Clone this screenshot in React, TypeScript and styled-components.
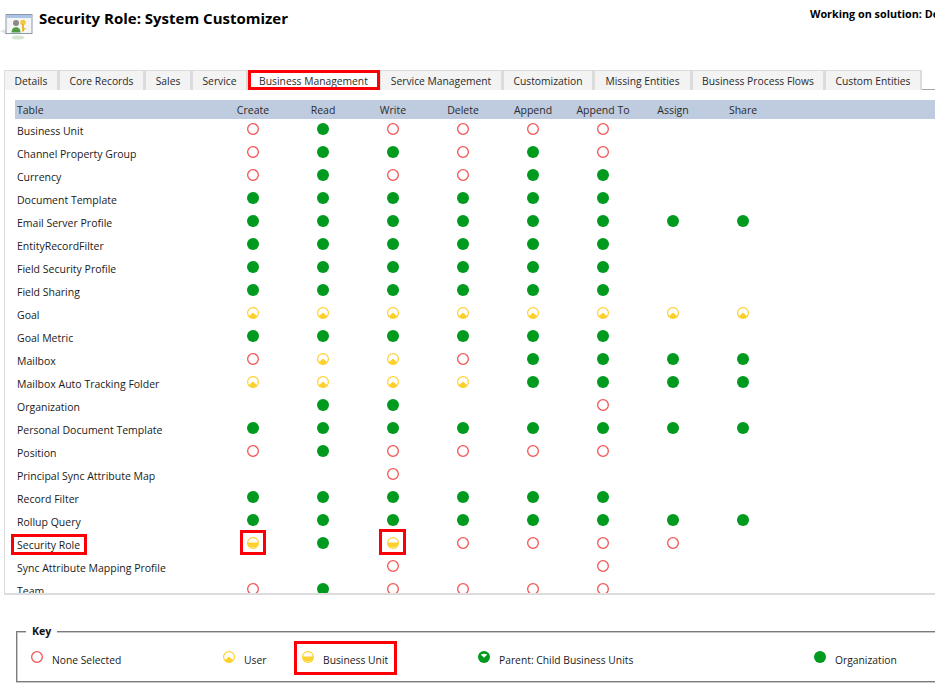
import styled, { createGlobalStyle } from "styled-components";

const GlobalStyle = createGlobalStyle`
  html, body {
    margin: 0;
    padding: 0;
    width: 935px;
    height: 687px;
    overflow: hidden;
    background: #fff;
  }
`;

const FONT = `"Open Sans", "Noto Sans", "Liberation Sans", sans-serif`;

const Page = styled.div`
  width: 935px;
  height: 687px;
  overflow: hidden;
  font-family: ${FONT};
  font-size: 10.5px;
  color: #1a1a1a;
`;

const Header = styled.header`
  display: flex;
  height: 70px;
  white-space: nowrap;
`;

const TitleIcon = styled.svg`
  width: 35px;
  height: 32px;
  margin-top: 10px;
  flex-shrink: 0;
`;

const Title = styled.h1`
  width: 771px;
  flex-shrink: 0;
  margin: 8px 0 0 4px;
  font-family: ${FONT};
  font-size: 15px;
  line-height: 20px;
  font-weight: 700;
  color: #000;
`;

const Solution = styled.div`
  flex-shrink: 0;
  margin-top: 6px;
  font-size: 10.8px;
  line-height: 16px;
  font-weight: 700;
  color: #000;
`;

const TabStrip = styled.nav`
  display: flex;
  height: 20px;
  padding-left: 4px;
`;

const Tab = styled.div<{ $w: number; $active?: boolean }>`
  position: relative;
  box-sizing: border-box;
  width: ${({ $w }) => $w}px;
  flex-shrink: 0;
  display: flex;
  align-items: center;
  justify-content: center;
  white-space: nowrap;
  font-size: 10.3px;
  background: ${({ $active }) => ($active ? "#fff" : "#f3f3f3")};
  border: 1px solid #dcdcdc;
  border-bottom: none;
  border-right-width: 2px;
  color: #2a2a2a;
`;

const TabLine = styled.div`
  flex: 1;
  border-bottom: 1px solid #a6a6a6;
`;

const Panel = styled.section`
  box-sizing: border-box;
  height: 505px;
  margin-left: 4px;
  padding: 10px 0 0 10px;
  overflow: hidden;
  border-left: 1px solid #dcdcdc;
  border-bottom: 2px solid #dcdcdc;
`;

const HeadRow = styled.div`
  display: flex;
  align-items: center;
  height: 19px;
  background: #bfcbdf;
  color: #2b2b2b;
`;

const Row = styled.div`
  display: flex;
  align-items: center;
  height: 23px;
`;

const NameCell = styled.div`
  position: relative;
  box-sizing: border-box;
  width: 203px;
  flex-shrink: 0;
  padding: 1px 0 0 2px;
  white-space: nowrap;
`;

const Cell = styled.div`
  position: relative;
  width: 70px;
  flex-shrink: 0;
  display: flex;
  align-items: center;
  justify-content: center;
  white-space: nowrap;
`;

const IconCell = styled(Cell)`
  height: 12px;
  margin-top: -3px;
`;

// red annotation frame drawn over a cell, offsets from the cell box
const Mark = styled.span<{ $t: number; $r: number; $b: number; $l: number }>`
  position: absolute;
  top: ${({ $t }) => $t}px;
  right: ${({ $r }) => $r}px;
  bottom: ${({ $b }) => $b}px;
  left: ${({ $l }) => $l}px;
  border: 3px solid #fb0007;
  pointer-events: none;
`;

const Key = styled.fieldset`
  box-sizing: border-box;
  width: 1000px;
  height: 58px;
  margin: 29px 0 0 16px;
  padding: 0 0 0 14px;
  border: 1px solid #7b7b7b;
  box-shadow: 0 1px 0 #c8c8c8, inset 0 1px 0 #c8c8c8, inset 1px 0 0 #c8c8c8;
`;

const Legend = styled.legend`
  margin-left: -5px;
  padding: 0 6px;
  background: #fff;
  font-weight: 700;
  font-size: 10.6px;
  line-height: 14px;
  color: #111;
`;

const KeyRow = styled.div`
  display: flex;
  align-items: center;
  height: 31px;
  margin-top: 5px;
`;

const KeyItem = styled.div<{ $w: number }>`
  position: relative;
  width: ${({ $w }) => $w}px;
  flex-shrink: 0;
  display: flex;
  align-items: center;
  gap: 9px;
  white-space: nowrap;
`;

const KeyIcon = styled.span`
  display: flex;
  margin-top: -3px;
`;

const KeyLabel = styled.span`
  padding-top: 2px;
  font-size: 10.3px;
`;

type Level = "N" | "U" | "B" | "P" | "O" | "";

const RED = "#f25555";
const YELLOW = "#fdd12d";
const GREEN = "#009a1f";

function Depth({ level }: { level: Level }) {
  if (!level) return null;
  return (
    <svg width="12" height="12" viewBox="0.5 0.5 12 12">
      {level === "N" && <circle cx="6.5" cy="6.5" r="5.35" fill="#fff" stroke={RED} strokeWidth="1.3" />}
      {level === "U" && (
        <>
          <circle cx="6.5" cy="6.5" r="5.4" fill="#fff" stroke={YELLOW} strokeWidth="1.2" />
          <path d="M2 10 L6.5 6 L11 10 A6 6 0 0 1 2 10 Z" fill={YELLOW} />
        </>
      )}
      {level === "B" && (
        <>
          <circle cx="6.5" cy="6.5" r="5.4" fill="#fff" stroke={YELLOW} strokeWidth="1.2" />
          <path d="M0.6 6 H12.4 A6 6 0 0 1 0.6 6 Z" fill={YELLOW} />
        </>
      )}
      {level === "P" && (
        <>
          <circle cx="6.5" cy="6.5" r="6" fill={GREEN} />
          <path d="M3.2 4 Q6.5 2.6 9.8 4 L6.5 7.2 Z" fill="#fff" />
        </>
      )}
      {level === "O" && <circle cx="6.5" cy="6.5" r="6" fill={GREEN} />}
    </svg>
  );
}

const TABS = [
  { label: "Details", w: 55 },
  { label: "Core Records", w: 86 },
  { label: "Sales", w: 47 },
  { label: "Service", w: 56 },
  { label: "Business Management", w: 132, active: true },
  { label: "Service Management", w: 123 },
  { label: "Customization", w: 91 },
  { label: "Missing Entities", w: 98 },
  { label: "Business Process Flows", w: 133 },
  { label: "Custom Entities", w: 97 },
];

const COLUMNS = ["Create", "Read", "Write", "Delete", "Append", "Append To", "Assign", "Share"];

const ROWS: { name: string; levels: Level[] }[] = [
  { name: "Business Unit", levels: ["N", "O", "N", "N", "N", "N"] },
  { name: "Channel Property Group", levels: ["N", "O", "O", "N", "O", "N"] },
  { name: "Currency", levels: ["N", "O", "N", "N", "O", "O"] },
  { name: "Document Template", levels: ["O", "O", "O", "O", "O", "O"] },
  { name: "Email Server Profile", levels: ["O", "O", "O", "O", "O", "O", "O", "O"] },
  { name: "EntityRecordFilter", levels: ["O", "O", "O", "O", "O", "O"] },
  { name: "Field Security Profile", levels: ["O", "O", "O", "O", "O", "O"] },
  { name: "Field Sharing", levels: ["O", "O", "O", "O", "O", "O"] },
  { name: "Goal", levels: ["U", "U", "U", "U", "U", "U", "U", "U"] },
  { name: "Goal Metric", levels: ["O", "O", "O", "O", "O", "O"] },
  { name: "Mailbox", levels: ["N", "U", "U", "N", "O", "O", "O", "O"] },
  { name: "Mailbox Auto Tracking Folder", levels: ["U", "U", "U", "U", "O", "O", "O", "O"] },
  { name: "Organization", levels: ["", "O", "O", "", "", "N"] },
  { name: "Personal Document Template", levels: ["O", "O", "O", "O", "O", "O", "O", "O"] },
  { name: "Position", levels: ["N", "O", "N", "N", "N", "N"] },
  { name: "Principal Sync Attribute Map", levels: ["", "", "N"] },
  { name: "Record Filter", levels: ["O", "O", "O", "O", "O", "O"] },
  { name: "Rollup Query", levels: ["O", "O", "O", "O", "O", "O", "O", "O"] },
  { name: "Security Role", levels: ["B", "O", "B", "N", "N", "N", "N"] },
  { name: "Sync Attribute Mapping Profile", levels: ["", "", "N", "", "", "N"] },
  { name: "Team", levels: ["N", "O", "N", "N", "N", "N"] },
];

const KEY: { level: Level; label: string; w: number; marked?: boolean }[] = [
  { level: "N", label: "None Selected", w: 192 },
  { level: "U", label: "User", w: 79 },
  { level: "B", label: "Business Unit", w: 176, marked: true },
  { level: "P", label: "Parent: Child Business Units", w: 336 },
  { level: "O", label: "Organization", w: 120 },
];

function RoleIcon() {
  return (
    <TitleIcon viewBox="0 0 35 32">
      <path d="M0 21 L7 19 V25 Z" fill="#e2e2e2" />
      <rect x="6" y="4.5" width="26" height="19" fill="#f5f5f5" stroke="#8d99a8" />
      <rect x="6.5" y="5" width="25" height="3" fill="#a9c4e4" />
      <circle cx="16" cy="13" r="3" fill="#8a8a8a" />
      <path d="M11.5 22.5 C11.5 15.5 20.5 15.5 20.5 22.5 Z" fill="#4f9c40" />
      <circle cx="23" cy="12.5" r="2.8" fill="#f3c93f" />
      <rect x="22" y="14" width="2" height="7.5" fill="#e8b92f" />
      <rect x="24" y="18" width="1.5" height="1.5" fill="#e8b92f" />
      <ellipse cx="18" cy="27.5" rx="6.5" ry="2" fill="#d5e6cf" />
    </TitleIcon>
  );
}

export default function App() {
  return (
    <Page>
      <GlobalStyle />
      <Header>
        <RoleIcon />
        <Title>Security Role: System Customizer</Title>
        <Solution>Working on solution: Default Solution</Solution>
      </Header>

      <TabStrip>
        {TABS.map((tab) => (
          <Tab key={tab.label} $w={tab.w} $active={tab.active}>
            {tab.label}
            {tab.active && <Mark $t={-1} $r={-2} $b={0} $l={-1} />}
          </Tab>
        ))}
        <TabLine />
      </TabStrip>

      <Panel>
        <HeadRow>
          <NameCell>Table</NameCell>
          {COLUMNS.map((col) => (
            <Cell key={col}>{col}</Cell>
          ))}
        </HeadRow>
        {ROWS.map((row) => {
          const isRole = row.name === "Security Role";
          return (
            <Row key={row.name}>
              <NameCell>
                {row.name}
                {isRole && <Mark $t={-3} $r={131} $b={-3} $l={-4} />}
              </NameCell>
              {row.levels.map((level, i) => (
                <IconCell key={i}>
                  <Depth level={level} />
                  {isRole && level === "B" && (
                    <Mark $t={i === 2 ? -8 : -7} $r={22} $b={-6} $l={i === 2 ? 21 : 22} />
                  )}
                </IconCell>
              ))}
            </Row>
          );
        })}
      </Panel>

      <Key>
        <Legend>Key</Legend>
        <KeyRow>
          {KEY.map((item) => (
            <KeyItem key={item.label} $w={item.w}>
              <KeyIcon>
                <Depth level={item.level} />
              </KeyIcon>
              <KeyLabel>{item.label}</KeyLabel>
              {item.marked && <Mark $t={-10} $r={81} $b={-8} $l={-8} />}
            </KeyItem>
          ))}
        </KeyRow>
      </Key>
    </Page>
  );
}
